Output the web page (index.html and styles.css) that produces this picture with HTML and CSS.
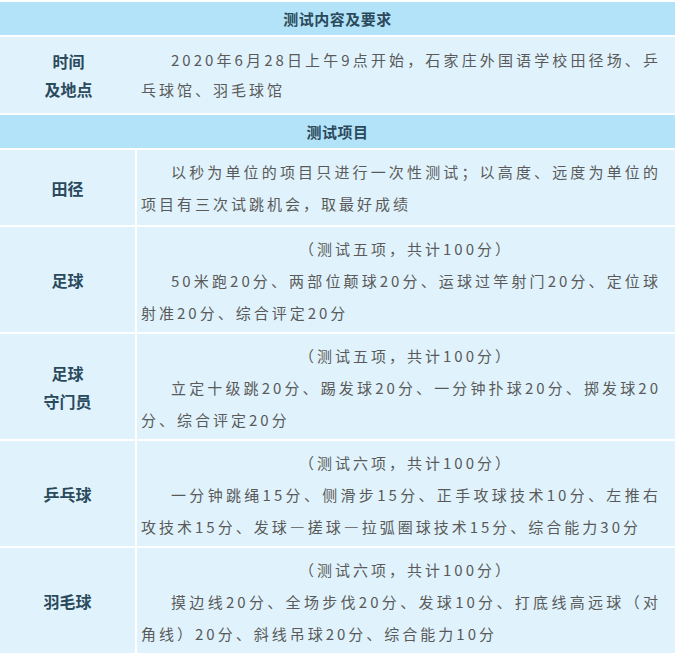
FILE: index.html
```html
<!DOCTYPE html>
<html lang="zh-CN">
<head>
<meta charset="utf-8">
<title>测试内容及要求</title>
<link rel="stylesheet" href="styles.css">
</head>
<body>
<div class="table">
  <div class="head">测试内容及要求</div>
  <div class="row row-plain">
    <div class="label label-tight">时间<br>及地点</div>
    <div class="cell cell-first"><p class="body">2020年6月28日上午9点开始，石家庄外国语学校田径场、乒乓球馆、羽毛球馆</p></div>
  </div>
  <div class="head">测试项目</div>
  <div class="row">
    <div class="label">田径</div>
    <div class="cell"><p class="body">以秒为单位的项目只进行一次性测试；以高度、远度为单位的项目有三次试跳机会，取最好成绩</p></div>
  </div>
  <div class="row">
    <div class="label">足球</div>
    <div class="cell"><p class="sum">（测试五项，共计100分）</p><p class="body">50米跑20分、两部位颠球20分、运球过竿射门20分、定位球射准20分、综合评定20分</p></div>
  </div>
  <div class="row">
    <div class="label label-tight">足球<br>守门员</div>
    <div class="cell"><p class="sum">（测试五项，共计100分）</p><p class="body">立定十级跳20分、踢发球20分、一分钟扑球20分、掷发球20分、综合评定20分</p></div>
  </div>
  <div class="row">
    <div class="label">乒乓球</div>
    <div class="cell"><p class="sum">（测试六项，共计100分）</p><p class="body">一分钟跳绳15分、侧滑步15分、正手攻球技术10分、左推右攻技术15分、发球—搓球—拉弧圈球技术15分、综合能力30分</p></div>
  </div>
  <div class="row">
    <div class="label">羽毛球</div>
    <div class="cell"><p class="sum">（测试六项，共计100分）</p><p class="body">摸边线20分、全场步伐20分、发球10分、打底线高远球（对角线）20分、斜线吊球20分、综合能力10分</p></div>
  </div>
</div>
</body>
</html>
```
FILE: styles.css
```css
html, body {
  margin: 0;
  padding: 0;
  background: #ffffff;
}

body {
  font-family: "Noto Sans CJK SC", "Noto Sans", sans-serif;
}

.table {
  width: 675px;
  padding-top: 2px;
  display: flex;
  flex-direction: column;
  gap: 2px;
}

.head {
  height: 33px;
  line-height: 33px;
  background: #b3e3f8;
  color: #2b4a5c;
  font-size: 15px;
  font-weight: bold;
  text-align: center;
  letter-spacing: 0.5px;
}

.row {
  display: grid;
  grid-template-columns: 135px 1fr;
  column-gap: 2px;
}

.row-plain {
  grid-template-columns: 137px 1fr;
  column-gap: 0;
}

.label {
  background: #e0f3fc;
  color: #2b4a5c;
  font-size: 16px;
  font-weight: bold;
  line-height: 28px;
  display: flex;
  align-items: center;
  justify-content: center;
  text-align: center;
}

.cell {
  background: #e0f3fc;
  color: #5a5a5a;
  font-size: 15px;
  letter-spacing: 3px;
  line-height: 32px;
  padding: 6px 14px 3px 4px;
  min-height: 66px;
}

.cell-first {
  line-height: 30px;
  padding: 8px 14px 8px 4px;
  min-height: 0;
}

.cell p {
  margin: 0;
}

.sum {
  text-align: center;
  padding-left: 10px;
}

.body {
  text-align: justify;
  text-indent: 2em;
}
```
